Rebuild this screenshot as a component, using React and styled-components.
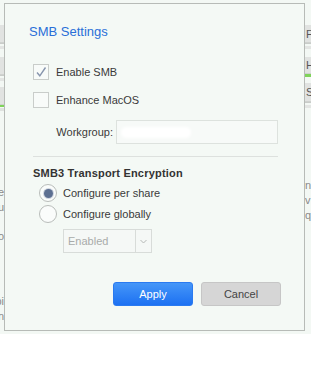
import React from "react";
import styled, { createGlobalStyle } from "styled-components";

const Global = createGlobalStyle`
  html, body { margin: 0; padding: 0; background: #ffffff; }
  body { font-family: "Liberation Sans", Arial, sans-serif; }
`;

const Page = styled.div`
  position: relative;
  width: 311px;
  height: 334px;
  background: #f3f8f4;
  overflow: hidden;
  display: flex;
  justify-content: space-between;
`;

const SidePane = styled.div`
  width: ${(p) => p.$w}px;
  overflow: hidden;
  display: flex;
  flex-direction: column;
  align-items: ${(p) => (p.$side === "left" ? "flex-end" : "flex-start")};
  padding-top: 25px;
`;

const Bar = styled.div`
  width: 60px;
  height: ${(p) => p.$h || 18}px;
  background: #e1e3e1;
  border-bottom: 1px solid #cfd2cf;
  display: flex;
  align-items: center;
  padding-left: 1px;
  font-size: 11px;
  color: #555;
  box-sizing: border-box;
  flex-shrink: 0;
`;

const Rule = styled.div`
  width: 60px;
  height: ${(p) => p.$h || 2}px;
  margin-top: ${(p) => p.$mt || 0}px;
  background: ${(p) => p.$c || "#d9dcd9"};
  flex-shrink: 0;
`;

const Spacer = styled.div`
  height: ${(p) => p.$h}px;
  flex-shrink: 0;
`;

const BackText = styled.div`
  font-size: 11px;
  line-height: 15px;
  color: #8a8a8a;
  white-space: nowrap;
  flex-shrink: 0;
`;

const Dialog = styled.div`
  position: absolute;
  left: 4px;
  top: 3px;
  width: 301px;
  height: 328px;
  box-sizing: border-box;
  border: 1px solid #b7bbb7;
  background: #f4f9f5;
  padding: 20px 26px 0 24px;
  display: flex;
  flex-direction: column;
`;

const Title = styled.div`
  font-size: 13px;
  line-height: 16px;
  color: #2a6fd8;
`;

const Form = styled.div`
  padding-left: 4px;
  display: flex;
  flex-direction: column;
`;

const CheckRow = styled.label`
  display: flex;
  align-items: center;
  gap: 7px;
  height: 16px;
  margin-top: ${(p) => p.$mt}px;
  font-size: 11px;
  color: #3a3a3a;
`;

const CheckBox = styled.span`
  width: 16px;
  height: 16px;
  box-sizing: border-box;
  border: 1px solid #c9cdca;
  background: #f8fbf9;
  display: flex;
  align-items: center;
  justify-content: center;
`;

const FieldRow = styled.div`
  display: flex;
  align-items: center;
  gap: 3px;
  margin-top: 12px;
  height: 24px;
`;

const FieldLabel = styled.span`
  width: 80px;
  text-align: right;
  font-size: 11px;
  color: #3a3a3a;
`;

const TextInput = styled.div`
  flex: 1;
  height: 24px;
  box-sizing: border-box;
  border: 1px solid #dde2de;
  background: #f7faf8;
  display: flex;
  align-items: center;
  padding-left: 4px;
`;

const Redacted = styled.span`
  width: 70px;
  height: 11px;
  background: #ffffff;
  border-radius: 5px;
  filter: blur(1.5px);
`;

const Divider = styled.div`
  height: 1px;
  background: #dde1de;
  margin-top: 12px;
`;

const Heading = styled.div`
  margin-top: 9px;
  font-size: 11px;
  line-height: 14px;
  font-weight: bold;
  color: #333;
  letter-spacing: 0.2px;
`;

const RadioRow = styled.label`
  display: flex;
  align-items: center;
  gap: 6px;
  height: 18px;
  margin-top: ${(p) => p.$mt}px;
  padding-left: 6px;
  font-size: 11px;
  color: #3a3a3a;
`;

const RadioCircle = styled.span`
  width: 18px;
  height: 18px;
  box-sizing: border-box;
  border-radius: 50%;
  border: 1px solid #b9bdba;
  background: #fafcfb;
  display: flex;
  align-items: center;
  justify-content: center;
  &::after {
    content: "";
    width: 9px;
    height: 9px;
    border-radius: 50%;
    background: ${(p) => (p.$on ? "#5c6f91" : "transparent")};
    box-shadow: ${(p) => (p.$on ? "0 0 0 1px #d0d6e0" : "none")};
  }
`;

const Select = styled.div`
  margin-top: 6px;
  margin-left: 30px;
  width: 89px;
  height: 24px;
  box-sizing: border-box;
  border: 1px solid #d8dcd9;
  background: #f5f8f6;
  display: flex;
  align-items: stretch;
`;

const SelectValue = styled.span`
  flex: 1;
  display: flex;
  align-items: center;
  padding-left: 4px;
  font-size: 11px;
  color: #a9abaa;
`;

const SelectArrow = styled.span`
  width: 15px;
  border-left: 1px solid #d8dcd9;
  display: flex;
  align-items: center;
  justify-content: center;
`;

const Buttons = styled.div`
  display: flex;
  justify-content: flex-end;
  gap: 8px;
  margin-top: 29px;
  margin-right: -3px;
`;

const Button = styled.button`
  width: 80px;
  height: 24px;
  box-sizing: border-box;
  border-radius: 3px;
  font-family: "Liberation Sans", Arial, sans-serif;
  font-size: 11px;
  padding: 0;
  border: 1px solid ${(p) => (p.$primary ? "#2a7af0" : "#c6c6c6")};
  background: ${(p) =>
    p.$primary ? "linear-gradient(#4596f8, #1d71f2)" : "#d6d6d6"};
  color: ${(p) => (p.$primary ? "#ffffff" : "#444444")};
`;

export default function App() {
  return (
    <>
      <Global />
      <Page>
        <SidePane $w={4} $side="left">
          <Bar />
          <Rule $h={1} $c="#c9ccc9" />
          <Rule $h={3} $mt={2} $c="#e3e5e3" />
          <Spacer $h={8} />
          <Bar />
          <Rule $h={1} $c="#c9ccc9" />
          <Rule $h={3} $mt={2} $c="#e3e5e3" />
          <Spacer $h={6} />
          <Bar />
          <Rule $h={2} $c="#7fd35a" />
          <Rule $h={3} $mt={1} $c="#dfe2df" />
          <Spacer $h={74} />
          <BackText>ce</BackText>
          <BackText>u</BackText>
          <Spacer $h={14} />
          <BackText>o</BackText>
          <Spacer $h={50} />
          <BackText>pi</BackText>
          <BackText>n</BackText>
        </SidePane>
        <SidePane $w={6} $side="right">
          <Bar>F</Bar>
          <Rule $h={1} $c="#c9ccc9" />
          <Rule $h={3} $mt={2} $c="#e3e5e3" />
          <Spacer $h={8} />
          <Bar $h={17}>HT</Bar>
          <Rule $h={3} $c="#7fd35a" />
          <Spacer $h={6} />
          <Bar $h={19}>S</Bar>
          <Rule $h={1} $c="#c9ccc9" />
          <Rule $h={3} $mt={2} $c="#e3e5e3" />
          <Spacer $h={70} />
          <BackText>n</BackText>
          <BackText>v</BackText>
          <BackText>q</BackText>
        </SidePane>

        <Dialog>
          <Title>SMB Settings</Title>
          <Form>
            <CheckRow $mt={24}>
              <CheckBox>
                <svg width="12" height="12" viewBox="0 0 12 12">
                  <path
                    d="M2 6.5 L4.8 9.8 L10.5 1.5"
                    fill="none"
                    stroke="#8795ad"
                    strokeWidth="1.4"
                  />
                </svg>
              </CheckBox>
              Enable SMB
            </CheckRow>
            <CheckRow $mt={12}>
              <CheckBox />
              Enhance MacOS
            </CheckRow>
            <FieldRow>
              <FieldLabel>Workgroup:</FieldLabel>
              <TextInput>
                <Redacted />
              </TextInput>
            </FieldRow>
            <Divider />
            <Heading>SMB3 Transport Encryption</Heading>
            <RadioRow $mt={4}>
              <RadioCircle $on />
              Configure per share
            </RadioRow>
            <RadioRow $mt={3}>
              <RadioCircle />
              Configure globally
            </RadioRow>
            <Select>
              <SelectValue>Enabled</SelectValue>
              <SelectArrow>
                <svg width="7" height="5" viewBox="0 0 7 5">
                  <path d="M0.5 1 L3.5 4 L6.5 1" fill="none" stroke="#b5b8b6" strokeWidth="1" />
                </svg>
              </SelectArrow>
            </Select>
            <Buttons>
              <Button $primary>Apply</Button>
              <Button>Cancel</Button>
            </Buttons>
          </Form>
        </Dialog>
      </Page>
    </>
  );
}
